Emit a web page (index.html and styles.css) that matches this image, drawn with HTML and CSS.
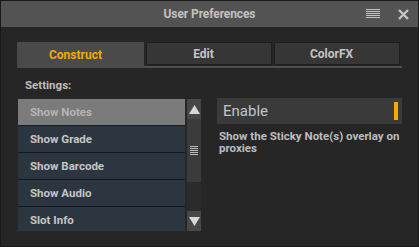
FILE: index.html
```html
<!DOCTYPE html>
<html>
<head>
<meta charset="utf-8">
<link rel="stylesheet" href="styles.css">
</head>
<body>
<div class="win">
  <div class="titlebar">
    <div class="title">User Preferences</div>
    <div class="tb-icons">
      <svg class="menu-ico" width="14" height="10" viewBox="0 0 14 10"><g fill="#c4c4c4"><rect x="0" y="0" width="14" height="1"/><rect x="0" y="2" width="14" height="1"/><rect x="0" y="4" width="14" height="1"/><rect x="0" y="6" width="14" height="1"/><rect x="0" y="8" width="14" height="1"/></g></svg>
      <svg class="close-ico" width="11" height="11" viewBox="0 0 11 11"><path d="M1 1 L10 10 M10 1 L1 10" stroke="#c4c4c4" stroke-width="2.4" fill="none"/></svg>
    </div>
  </div>
  <div class="content">
    <div class="tabs">
      <div class="tab active">Construct</div>
      <div class="tab-rest">
        <div class="tab">Edit</div>
        <div class="tab">ColorFX</div>
      </div>
    </div>
    <div class="settings-label">Settings:</div>
    <div class="main">
      <div class="list-col">
        <div class="list">
          <div class="row sel">Show Notes</div>
          <div class="row">Show Grade</div>
          <div class="row">Show Barcode</div>
          <div class="row">Show Audio</div>
          <div class="row">Slot Info</div>
        </div>
        <div class="scroll">
          <div class="sbtn"><svg width="11" height="9" viewBox="0 0 11 9"><path d="M5.5 0 L11 9 L0 9 Z" fill="#d8d8d8"/></svg></div>
          <div class="thumb"><svg width="8" height="9" viewBox="0 0 8 9"><g fill="#bdbdbd"><rect y="0" width="8" height="1"/><rect y="2" width="8" height="1"/><rect y="4" width="8" height="1"/><rect y="6" width="8" height="1"/><rect y="8" width="8" height="1"/></g></svg></div>
          <div class="track"></div>
          <div class="sbtn"><svg width="11" height="9" viewBox="0 0 11 9"><path d="M0 0 L11 0 L5.5 9 Z" fill="#d8d8d8"/></svg></div>
        </div>
      </div>
      <div class="panel">
        <div class="enable"><span>Enable</span><span class="bar"></span></div>
        <div class="desc">Show the Sticky Note(s) overlay on proxies</div>
      </div>
    </div>
  </div>
</div>
</body>
</html>
```
FILE: styles.css
```css
* { box-sizing: border-box; }
html, body { margin: 0; padding: 0; background: #262626; }
body { font-family: Roboto, "Liberation Sans", sans-serif; }
.win {
  width: 419px; height: 247px;
  border: 1px solid #1a1a1a;
  background: #262626;
  overflow: hidden;
}
.titlebar {
  height: 26px;
  background: #535353;
  position: relative;
  display: flex; align-items: center; justify-content: center;
}
.title {
  color: #c2c2c2; font-size: 12px; font-weight: 700;
  letter-spacing: -0.1px;
}
.tb-icons {
  position: absolute; right: 9px; top: 0; height: 26px;
  display: flex; align-items: center; gap: 18px;
}
.menu-ico { margin-top: -1px; }
.content { padding: 15px 16px 0 16px; }
.tabs { display: flex; align-items: flex-start; height: 26px; }
.tab {
  display: flex; align-items: center; justify-content: center;
  padding-right: 10px;
  font-size: 12px; font-weight: 700; color: #c4c4c4;
}
.tab.active {
  width: 127px; height: 26px; background: #4a4a4a; color: #f2a900;
}
.tab-rest {
  display: flex; gap: 2px; padding: 0 2px 1px 2px;
  border-bottom: 2px solid #4d4d4d;
  width: 258px;
}
.tab-rest .tab {
  width: 126px; height: 23px;
  background: #363636; border: 1px solid #1f1f1f;
  padding-right: 11px;
}
.settings-label {
  color: #bdbdbd; font-size: 11.5px; font-weight: 700;
  padding: 10px 0 0 8px; height: 30px;
}
.main { display: flex; gap: 16px; }
.list-col { display: flex; gap: 2px; margin: 0 0 0 1px; }
.list {
  width: 167px; height: 132px; overflow: hidden;
  background: #14191e;
  display: flex; flex-direction: column; gap: 1px;
  margin-top: 1px;
}
.row {
  flex: none; height: 26px; line-height: 26px;
  padding-left: 12px;
  background: #2b3640; color: #c6c6c6;
  font-size: 11.5px; font-weight: 700;
}
.row.sel { background: #7b7b7b; color: #b4b4b4; }
.scroll {
  width: 14px; height: 132px; margin-top: 1px;
  display: flex; flex-direction: column;
  background: #2b2b2b;
}
.sbtn {
  height: 20px; background: #474747;
  display: flex; align-items: center; justify-content: center;
}
.thumb {
  height: 63px; background: #3b3b3b;
  display: flex; align-items: center; justify-content: center;
}
.track { flex: 1; }
.panel { width: 185px; }
.enable {
  height: 26px; background: #3a3a3a;
  display: flex; align-items: center; justify-content: space-between;
  padding: 0 4px 0 6px;
  color: #c4c4c4; font-size: 15px;
}
.bar { width: 4px; height: 18px; background: #f2a900; }
.desc {
  margin-top: 6px; padding-left: 2px;
  color: #bdbdbd; font-size: 11.5px; font-weight: 700; line-height: 12px;
}
```
